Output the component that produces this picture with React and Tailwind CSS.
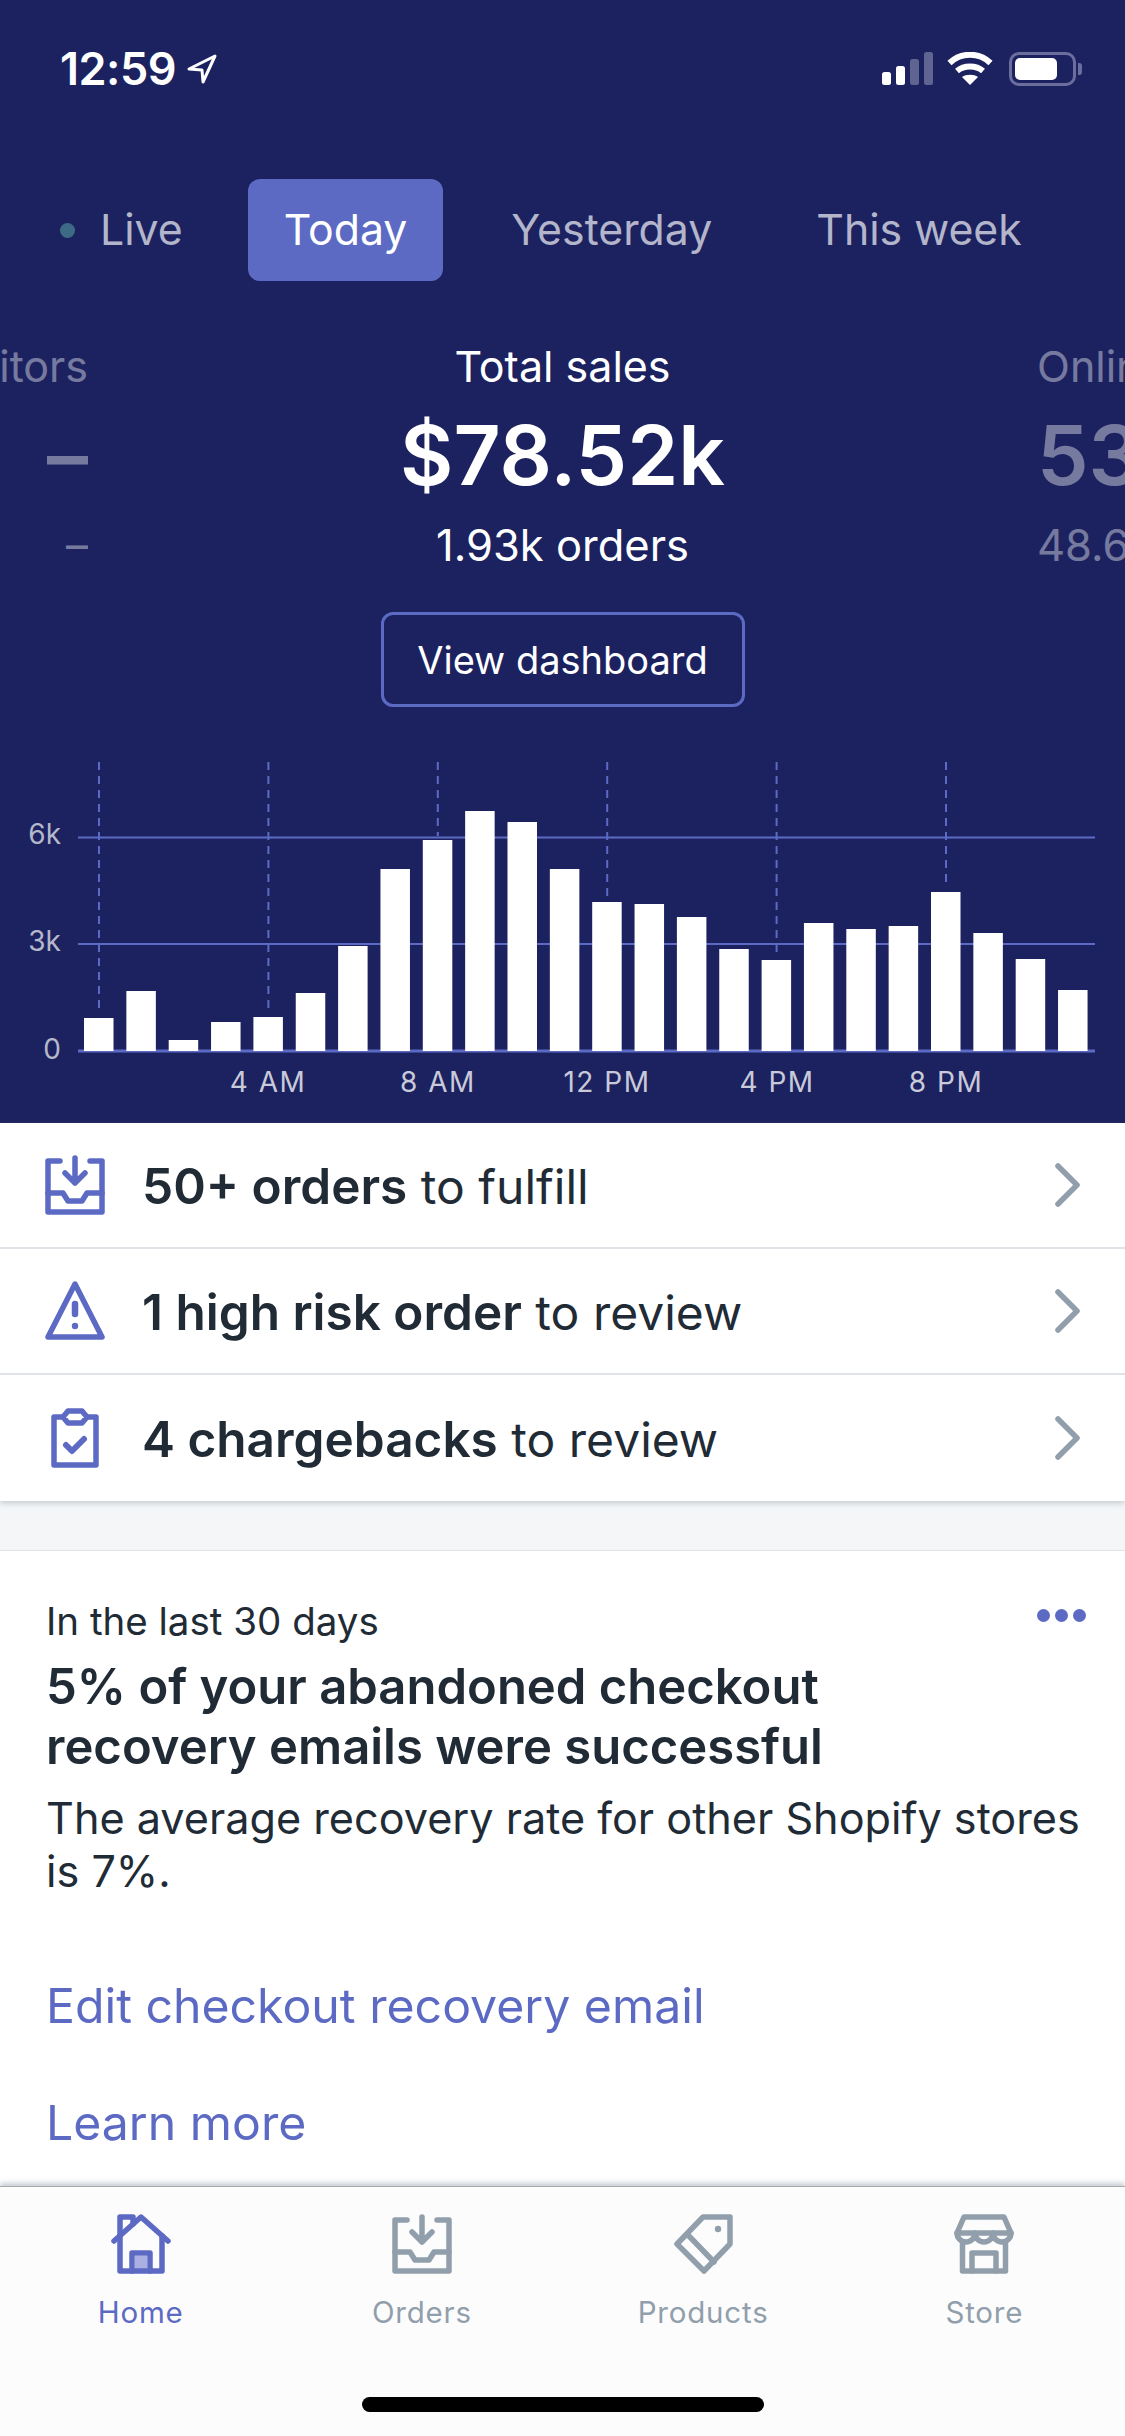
import React from "react";

const bars = [1018, 991, 1040, 1022, 1017, 993, 946, 869, 840, 811, 822, 869, 902, 904, 917, 949, 960, 923, 929, 926, 892, 933, 959, 990];
const CHART_TOP = 740;

const Chart = () => (
  <svg width="1125" height="383" viewBox="0 740 1125 383" className="block">
    {[837.5, 944].map((y) => (
      <line key={y} x1="78" x2="1095" y1={y} y2={y} stroke="#5c6ac4" strokeWidth="2" />
    ))}
    <line x1="78" x2="1095" y1="1051" y2="1051" stroke="#5c6ac4" strokeWidth="3" />
    {bars.map((top, i) =>
      i % 4 === 0 ? (
        <line key={i} x1={99 + i * 42.35} x2={99 + i * 42.35} y1={CHART_TOP + 22} y2={top - 4} stroke="#5c6ac4" strokeWidth="2" strokeDasharray="8 6" />
      ) : null
    )}
    {bars.map((top, i) => (
      <rect key={i} x={84 + i * 42.35} y={top} width="29.5" height={1051 - top} fill="#fff" />
    ))}
    <g fill="#b5b7cb" fontSize="28" textAnchor="end">
      <text x="61" y="844">6k</text>
      <text x="61" y="951">3k</text>
      <text x="61" y="1059">0</text>
    </g>
    <g fill="#c9cad9" fontSize="28" letterSpacing="1.5" textAnchor="middle">
      <text x="268" y="1092">4 AM</text>
      <text x="438" y="1092">8 AM</text>
      <text x="607" y="1092">12 PM</text>
      <text x="777" y="1092">4 PM</text>
      <text x="946" y="1092">8 PM</text>
    </g>
  </svg>
);

const InboxIcon = ({ className }) => (
  <svg viewBox="0 0 60 60" fill="none" stroke="currentColor" strokeWidth="5.5" strokeLinecap="round" strokeLinejoin="round" className={className}>
    <path d="M15 6H3V57H57V6H45" />
    <path d="M3 38H18L23 46H37L42 38H57" />
    <path d="M30 3V28M20 18L30 28L40 18" />
  </svg>
);

const WarningIcon = ({ className }) => (
  <svg viewBox="0 0 60 60" fill="none" stroke="currentColor" strokeWidth="5.5" strokeLinecap="round" strokeLinejoin="round" className={className}>
    <path d="M30 3L57 56H3Z" />
    <path d="M30 23V33" strokeWidth="6.5" />
    <circle cx="30" cy="45" r="3.2" fill="currentColor" stroke="none" />
  </svg>
);

const ClipboardIcon = ({ className }) => (
  <svg viewBox="0 0 60 60" fill="none" stroke="currentColor" strokeWidth="5.5" strokeLinecap="round" strokeLinejoin="round" className={className}>
    <path d="M18 9H9V57H51V9H42" />
    <path d="M18 9L23 3H37L42 9L37 15H23Z" />
    <path d="M21 37L27 43L39 31" strokeWidth="6" />
  </svg>
);

const HomeIcon = ({ className }) => (
  <svg viewBox="0 0 60 60" fill="none" stroke="currentColor" strokeWidth="5.5" strokeLinecap="round" strokeLinejoin="round" className={className}>
    <rect x="24" y="42" width="12" height="14" fill="#aab0e1" stroke="none" />
    <path d="M3 27L30 3L57 27" />
    <path d="M9 22V57H51V22" />
    <path d="M9 21V3H22V10" />
    <path d="M21 57V39H39V57" />
  </svg>
);

const TagIcon = ({ className }) => (
  <svg viewBox="0 0 60 60" fill="none" stroke="currentColor" strokeWidth="5.5" strokeLinecap="round" strokeLinejoin="round" className={className}>
    <path d="M57 3H30L4 30L31 57L57 30Z" />
    <path d="M15 21L41 48" />
    <circle cx="45" cy="15" r="3.2" fill="currentColor" stroke="none" />
  </svg>
);

const StoreIcon = ({ className }) => (
  <svg viewBox="0 0 60 60" fill="none" stroke="currentColor" strokeWidth="5.5" strokeLinecap="round" strokeLinejoin="round" className={className}>
    <path d="M10 3H50L57 19H3Z" />
    <path d="M3 19a9 9 0 0 0 18 0a9 9 0 0 0 18 0a9 9 0 0 0 18 0" />
    <path d="M8.5 28V57H51.5V28" />
    <path d="M18 57V39H42V57" />
  </svg>
);

const Chevron = () => (
  <svg width="28" height="44" viewBox="0 0 28 44" fill="none" stroke="#919eab" strokeWidth="5.5" strokeLinecap="round" strokeLinejoin="round" className="ml-auto">
    <path d="M4 3L23 22L4 41" />
  </svg>
);

const StatusBar = () => (
  <div className="h-[179px] flex items-start pl-[60px] pr-[43px] pt-[43px] text-white">
    <span className="text-[45px] leading-[52px] font-semibold tracking-[-0.5px]">12:59</span>
    <svg width="32" height="32" viewBox="0 0 32 32" fill="none" stroke="#fff" strokeWidth="3" strokeLinejoin="round" className="ml-[10px] mt-[10px]">
      <path d="M29 3L3 16L16 17L17 29Z" />
    </svg>
    <svg width="53" height="34" viewBox="0 0 53 34" fill="#fff" className="ml-auto mt-[9px]">
      <rect x="0" y="20" width="9" height="13" rx="2.5" />
      <rect x="14" y="14" width="9" height="19" rx="2.5" />
      <rect x="28" y="7" width="9" height="26" rx="2.5" opacity="0.3" />
      <rect x="42" y="0" width="9" height="33" rx="2.5" opacity="0.3" />
    </svg>
    <svg width="46" height="34" viewBox="0 0 46 34" fill="none" stroke="#fff" strokeWidth="6" className="ml-[12px] mt-[9px]">
      <path d="M2.5 11C14 0 32 0 43.5 11" />
      <path d="M10 19C17 13 29 13 36 19" />
      <path d="M23 33L15 25C19 22 27 22 31 25Z" fill="#fff" stroke="none" />
    </svg>
    <div className="ml-[16px] mt-[9px] flex items-center">
      <div className="w-[67px] h-[34px] rounded-[10px] border-[3px] border-[#6b6e9c] p-[3px]">
        <div className="w-[42px] h-full rounded-[5px] bg-white"></div>
      </div>
      <div className="ml-[2px] w-[4px] h-[12px] rounded-r-[3px] bg-[#6b6e9c]"></div>
    </div>
  </div>
);

const Tabs = () => (
  <div className="h-[102px] flex items-stretch gap-[32px] pl-[60px] text-[42.8px] text-[#b3b5cb]">
    <div className="flex items-center">
      <div className="w-[15px] h-[15px] rounded-full bg-[#3d6a85] mr-[25px]"></div>
      <span className="pr-[33px]">Live</span>
    </div>
    <div className="flex items-center px-[36px] rounded-[12px] bg-[#5c6ac4] text-white">Today</div>
    <div className="flex items-center px-[36px]">Yesterday</div>
    <div className="flex items-center px-[36px]">This week</div>
  </div>
);

const Metrics = () => (
  <div className="mt-[59px] flex text-white">
    <div className="w-[88px] flex flex-col items-end overflow-hidden whitespace-nowrap opacity-40">
      <div className="text-[43px] leading-[52px]">Visitors</div>
      <div className="mt-[16px] text-[82px] leading-[96px] font-semibold">–</div>
      <div className="mt-[16px] text-[44px] leading-[50px]">–</div>
    </div>
    <div className="flex-1 flex flex-col items-center">
      <div className="text-[43px] leading-[52px]">Total sales</div>
      <div className="mt-[16px] text-[82px] leading-[96px] font-semibold">$78.52k</div>
      <div className="mt-[16px] text-[43.5px] leading-[50px]">1.93k orders</div>
      <button className="mt-[42px] w-[364px] h-[95px] pt-[2px] rounded-[12px] border-[3px] border-[#5c6ac4] text-[38px] text-white">View dashboard</button>
    </div>
    <div className="w-[88px] flex flex-col items-start overflow-hidden whitespace-nowrap opacity-40">
      <div className="text-[43px] leading-[52px]">Online store</div>
      <div className="mt-[16px] text-[82px] leading-[96px] font-semibold">53.4k</div>
      <div className="mt-[16px] text-[43.5px] leading-[50px]">48.6k</div>
    </div>
  </div>
);

const Row = ({ icon: Icon, bold, rest, last }) => (
  <div className={`h-[126px] flex items-center pl-[45px] pr-[43px] text-[48px] text-[#212b36] ${last ? "" : "border-b-2 border-[#dfe3e8]"}`}>
    <Icon className="w-[60px] h-[60px] text-[#5c6ac4] shrink-0" />
    <div className="ml-[37px] pt-[2px]">
      <span className="font-semibold text-[49.5px]">{bold}</span> {rest}
    </div>
    <Chevron />
  </div>
);

const TabItem = ({ icon: Icon, label, active }) => (
  <div className={`flex flex-col items-center pt-[27px] ${active ? "text-[#5c6ac4]" : "text-[#919eab]"}`}>
    <Icon className="w-[60px] h-[60px]" />
    <span className="mt-[20px] text-[29.5px] leading-[36px] tracking-[0.8px]">{label}</span>
  </div>
);

export default function App() {
  return (
    <div className="w-[1125px] h-[2436px] flex flex-col overflow-hidden bg-[#f4f6f8] font-['Inter',sans-serif]">
      <div className="h-[1123px] shrink-0 bg-[#1c2260]">
        <StatusBar />
        <Tabs />
        <Metrics />
        <div className="mt-[33px]">
          <Chart />
        </div>
      </div>

      <div className="bg-white shadow-[0_2px_6px_rgba(99,115,129,0.35)]">
        <Row icon={InboxIcon} bold="50+ orders" rest="to fulfill" />
        <Row icon={WarningIcon} bold="1 high risk order" rest="to review" />
        <Row icon={ClipboardIcon} bold="4 chargebacks" rest="to review" last />
      </div>

      <div className="mt-[49px] flex-1 bg-white border-t border-[#dfe3e8] px-[46px] pt-[46px] text-[#212b36]">
        <div className="flex items-start">
          <div className="text-[38.5px] leading-[48px]">In the last 30 days</div>
          <div className="ml-auto mt-[12px] -mr-[7px] flex gap-[5px]">
            <div className="w-[13px] h-[13px] rounded-full bg-[#5c6ac4]"></div>
            <div className="w-[13px] h-[13px] rounded-full bg-[#5c6ac4]"></div>
            <div className="w-[13px] h-[13px] rounded-full bg-[#5c6ac4]"></div>
          </div>
        </div>
        <div className="mt-[12px] text-[49px] leading-[60px] font-semibold">
          5% of your abandoned checkout
          <br />
          recovery emails were successful
        </div>
        <div className="mt-[15px] -mr-[10px] text-[43.2px] leading-[53px]">The average recovery rate for other Shopify stores is 7%.</div>
        <div className="mt-[78px] text-[48.2px] leading-[60px] text-[#5c6ac4]">Edit checkout recovery email</div>
        <div className="mt-[57px] text-[48.2px] leading-[60px] text-[#5c6ac4]">Learn more</div>
      </div>

      <div className="h-[250px] shrink-0 bg-[#fcfcfc] border-t border-[#a9abab] shadow-[0_-3px_5px_rgba(145,158,171,0.5)] flex flex-col">
        <div className="grid grid-cols-4">
          <TabItem icon={HomeIcon} label="Home" active />
          <TabItem icon={InboxIcon} label="Orders" />
          <TabItem icon={TagIcon} label="Products" />
          <TabItem icon={StoreIcon} label="Store" />
        </div>
        <div className="mt-auto mb-[24px] mx-auto w-[402px] h-[15px] rounded-full bg-black"></div>
      </div>
    </div>
  );
}
